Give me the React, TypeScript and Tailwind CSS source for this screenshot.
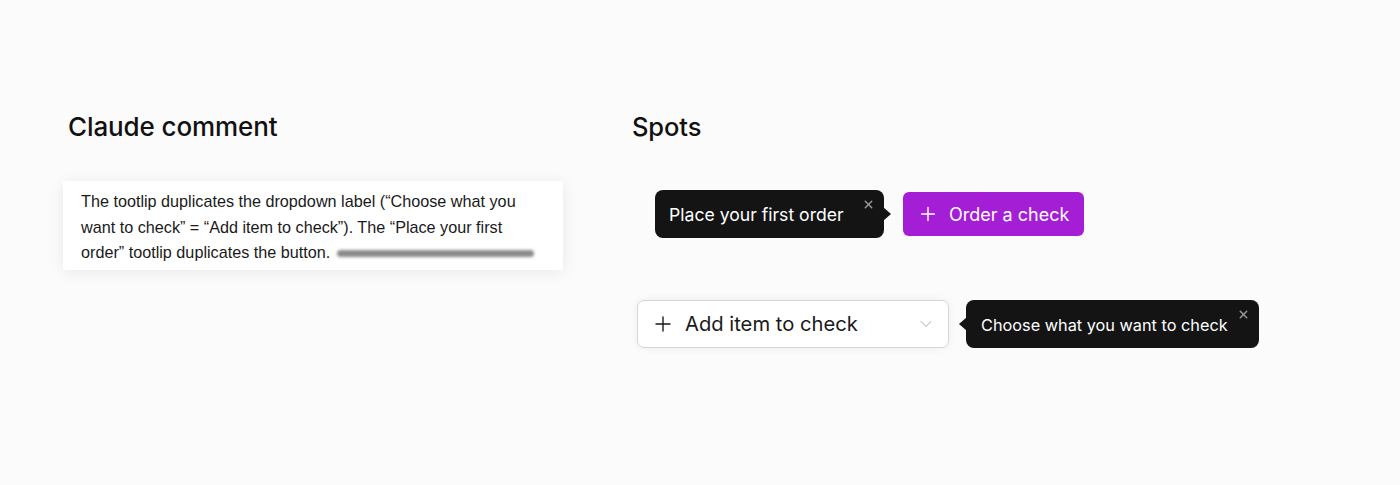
import { Plus, X, ChevronDown } from "lucide-react";

function Tooltip({ text, arrow, className = "" }: { text: string; arrow: "left" | "right"; className?: string }) {
  return (
    <div className={`relative flex items-center h-[48px] rounded-[8px] bg-[#141414] text-white ${className}`}>
      <span className="pt-[2px]">{text}</span>
      <X size={13} strokeWidth={2.5} className="absolute top-[8px] right-[9px] text-[#9a9a9a]" />
      {arrow === "right" ? (
        <span className="absolute right-[-7px] top-1/2 -translate-y-1/2 w-0 h-0 border-y-[7px] border-y-transparent border-l-[8px] border-l-[#141414]" />
      ) : (
        <span className="absolute left-[-7px] top-1/2 -translate-y-1/2 w-0 h-0 border-y-[7px] border-y-transparent border-r-[8px] border-r-[#141414]" />
      )}
    </div>
  );
}

export default function App() {
  return (
    <div className="w-[1400px] h-[485px] bg-[#fbfbfb] flex font-['Inter',sans-serif]">
      {/* Left column */}
      <div className="w-[632px] shrink-0 pt-[110px] pl-[63px]">
        <h2 className="pl-[5px] text-[26px] leading-[34px] font-medium text-[#111] tracking-[-0.1px]">Claude comment</h2>
        <div className="mt-[37px] w-[500px] bg-white shadow-[0_2px_14px_rgba(0,0,0,0.08)] pl-[18px] pr-[20px] pt-[8px] pb-[4px] font-['Liberation_Sans',Arial,sans-serif] text-[16.2px] leading-[25.5px] text-[#1a1a1a]">
          The tootlip duplicates the dropdown label (“Choose what you want to check” = “Add item to check”). The “Place your first order” tootlip duplicates the button.{" "}
          <span className="inline-block align-middle ml-[2px] w-[197px] h-[7px] rounded-full bg-[#8a8a8a] blur-[1.5px]" />
        </div>
      </div>

      {/* Right column */}
      <div className="pt-[110px]">
        <h2 className="text-[25.5px] leading-[34px] font-medium text-[#111] tracking-[-0.1px]">Spots</h2>

        <div className="mt-[46px] flex items-center pl-[23px]">
          <Tooltip text="Place your first order" arrow="right" className="w-[229px] pl-[14px] text-[17.6px]" />
          <button className="ml-[19px] flex items-center h-[44px] w-[181px] rounded-[6px] bg-[#a41ed6] text-white text-[18px] pl-[14px] gap-[10px]">
            <Plus size={22} strokeWidth={1.6} />
            <span>Order a check</span>
          </button>
        </div>

        <div className="mt-[62px] flex items-center pl-[5px]">
          <div className="flex items-center h-[48px] w-[312px] rounded-[7px] border border-[#d6d6d6] bg-white shadow-[0_0_8px_rgba(0,0,0,0.06)] pl-[13px] pr-[12px]">
            <Plus size={24} strokeWidth={1.4} className="text-[#1a1a1a]" />
            <span className="ml-[10px] text-[20.2px] text-[#1a1a1a]">Add item to check</span>
            <ChevronDown size={20} strokeWidth={1.2} className="ml-auto text-[#a8a8a8]" />
          </div>
          <Tooltip text="Choose what you want to check" arrow="left" className="ml-[17px] w-[293px] pl-[15px] text-[16.3px]" />
        </div>
      </div>
    </div>
  );
}
